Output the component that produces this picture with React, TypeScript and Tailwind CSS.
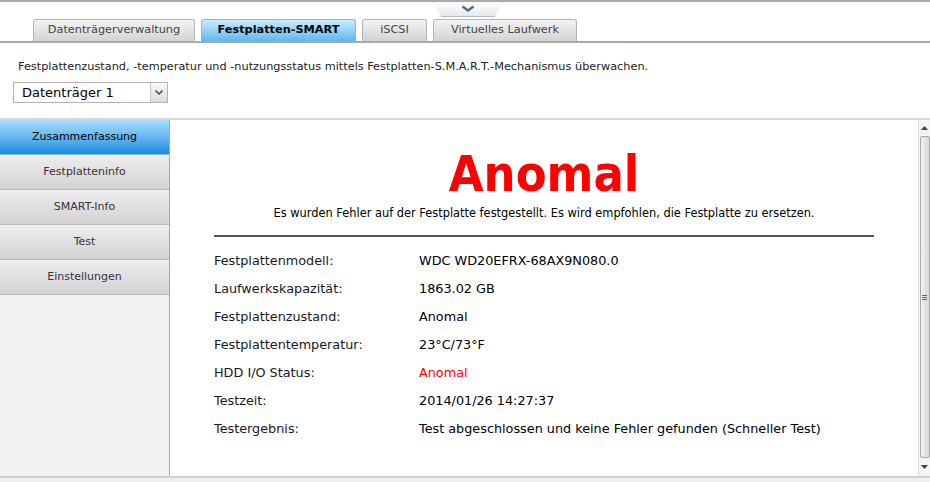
import React from "react";

const font = { fontFamily: "'DejaVu Sans', Verdana, sans-serif" };

export default function App() {
  const tabs = [
    { label: "Datenträgerverwaltung", w: "w-[162px]", active: false },
    { label: "Festplatten-SMART", w: "w-[155px]", active: true },
    { label: "iSCSI", w: "w-[65px]", active: false },
    { label: "Virtuelles Laufwerk", w: "w-[144px]", active: false },
  ];
  const side = ["Zusammenfassung", "Festplatteninfo", "SMART-Info", "Test", "Einstellungen"];
  const rows: [string, string, boolean][] = [
    ["Festplattenmodell:", "WDC WD20EFRX-68AX9N080.0", false],
    ["Laufwerkskapazität:", "1863.02 GB", false],
    ["Festplattenzustand:", "Anomal", false],
    ["Festplattentemperatur:", "23°C/73°F", false],
    ["HDD I/O Status:", "Anomal", true],
    ["Testzeit:", "2014/01/26 14:27:37", false],
    ["Testergebnis:", "Test abgeschlossen und keine Fehler gefunden (Schneller Test)", false],
  ];
  return (
    <div className="w-[930px] h-[482px] bg-white overflow-hidden flex flex-col text-[#1a1a1a]" style={font}>
      {/* top bar */}
      <div className="relative h-[43px] border-t-2 border-[#a9a9a9] shrink-0">
        <div className="absolute left-[433px] top-0 w-[70px] h-[15px] bg-gradient-to-b from-[#ffffff] to-[#e4e8ec] border-x border-b border-[#b8bcc0] rounded-b-[8px] flex items-center justify-center [clip-path:polygon(0_0,100%_0,88%_100%,12%_100%)]">
          <svg width="14" height="8" viewBox="0 0 14 8"><path d="M1.5 1.5 L7 5.5 L12.5 1.5" stroke="#4a6f8f" strokeWidth="2.5" fill="none" /></svg>
        </div>
        <div className="absolute left-0 right-0 bottom-0 h-[24px] flex items-end pl-[33px] gap-[6px] border-b-2 border-[#a9a9a9]">
          {tabs.map((t) => (
            <div
              key={t.label}
              className={`${t.w} h-[22px] rounded-t-[3px] border border-b-0 flex items-center justify-center text-[11.3px] ${
                t.active
                  ? "bg-gradient-to-b from-[#c9eafc] to-[#5bb8ef] border-[#8fb7d6] font-bold text-black"
                  : "bg-gradient-to-b from-[#f4f4f4] to-[#d3d3d3] border-[#b4b4b4] text-[#444]"
              }`}
            >
              {t.label}
            </div>
          ))}
        </div>
      </div>
      {/* description */}
      <div className="pl-[18px] pt-[17px] text-[11.3px] leading-[14px] text-[#222] shrink-0">
        Festplattenzustand, -temperatur und -nutzungsstatus mittels Festplatten-S.M.A.R.T.-Mechanismus überwachen.
      </div>
      <div className="pl-[13px] pt-[8px] pb-[15px] shrink-0">
        <div className="w-[155px] h-[21px] border border-[#b4b4b4] flex items-center">
          <div className="flex-1 pl-[8px] text-[13px] text-black">Datenträger 1</div>
          <div className="w-[17px] h-[19px] bg-gradient-to-b from-[#f8f8f8] to-[#dcdcdc] border-l border-[#c8c8c8] flex items-center justify-center">
            <svg width="8" height="5" viewBox="0 0 8 5"><path d="M0.5 0.5 L4 4 L7.5 0.5" stroke="#555" strokeWidth="1.6" fill="none" /></svg>
          </div>
        </div>
      </div>
      {/* main */}
      <div className="flex-1 flex border-t-2 border-[#d8d8d8] min-h-0">
        <div className="w-[170px] shrink-0 bg-[#f2f2f4] border-r border-[#a8a8a8] flex flex-col">
          {side.map((s, i) => (
            <div
              key={s}
              className={`h-[35px] flex items-center justify-center text-[11px] border-b ${
                i === 0
                  ? "bg-gradient-to-b from-[#a6defb] to-[#0a8ce0] border-[#8cbde0] text-black"
                  : "bg-gradient-to-b from-[#eeeeee] to-[#d2d2d2] border-[#b8b8b8] text-[#3a3040]"
              }`}
            >
              {s}
            </div>
          ))}
        </div>
        <div className="flex-1 flex min-w-0">
          <div className="flex-1 flex flex-col items-center pt-[28px]">
            <div className="text-[50px] leading-[52px] font-bold text-[#ff0000]" style={{ fontFamily: "'DejaVu Sans Condensed', 'DejaVu Sans', sans-serif" }}>Anomal</div>
            <div className="text-[11.4px] leading-[14px] mt-[6px] text-black">
              Es wurden Fehler auf der Festplatte festgestellt. Es wird empfohlen, die Festplatte zu ersetzen.
            </div>
            <div className="w-[660px] h-[2px] bg-[#555] mt-[15px]" />
            <div className="w-[660px] mt-[10px] flex flex-col">
              {rows.map(([k, v, red]) => (
                <div key={k} className="h-[28px] flex items-center text-[12.8px]">
                  <div className="w-[205px]">{k}</div>
                  <div className={red ? "text-[#ff0000]" : "text-black"}>{v}</div>
                </div>
              ))}
            </div>
          </div>
          {/* scrollbar */}
          <div className="w-[12px] shrink-0 bg-[#f4f4f4] border-l border-[#dcdcdc] flex flex-col items-center">
            <div className="h-[16px] flex items-center justify-center">
              <svg width="7" height="4" viewBox="0 0 7 4"><path d="M0 4 L3.5 0 L7 4 Z" fill="#444" /></svg>
            </div>
            <div className="flex-1 w-[10px] bg-gradient-to-r from-[#f0f0f0] to-[#d8d8d8] border border-[#a8a8a8] rounded-[2px] flex items-center justify-center">
              <div className="flex flex-col gap-[1px]">
                <div className="w-[5px] h-[1px] bg-[#666]" />
                <div className="w-[5px] h-[1px] bg-[#666]" />
                <div className="w-[5px] h-[1px] bg-[#666]" />
              </div>
            </div>
            <div className="h-[18px] flex items-center justify-center">
              <svg width="7" height="4" viewBox="0 0 7 4"><path d="M0 0 L3.5 4 L7 0 Z" fill="#444" /></svg>
            </div>
          </div>
        </div>
      </div>
      <div className="h-[6px] bg-[#f0f0f0] border-t-2 border-[#d0d0d0] shrink-0" />
    </div>
  );
}
